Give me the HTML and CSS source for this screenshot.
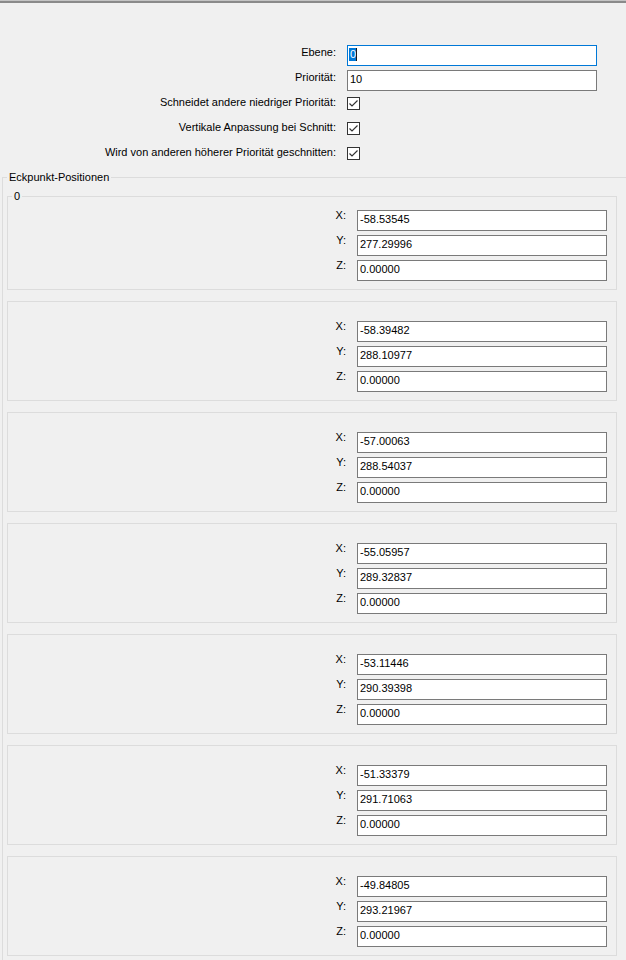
FILE: index.html
```html
<!DOCTYPE html>
<html lang="de">
<head>
<meta charset="utf-8">
<title>Eigenschaften</title>
<link rel="stylesheet" href="styles.css">
</head>
<body>
<div class="topline"></div>
<div class="form">
  <div class="row">
    <span class="lbl">Ebene:</span>
    <div class="field focused"><span class="sel">0</span><span class="caret"></span></div>
  </div>
  <div class="row">
    <span class="lbl">Priorität:</span>
    <div class="field">10</div>
  </div>
  <div class="row">
    <span class="lbl">Schneidet andere niedriger Priorität:</span>
    <span class="check"><svg width="11" height="11" viewBox="0 0 11 11"><polyline points="1.5,5.5 4,8 9.5,2.5" fill="none" stroke="#333" stroke-width="1.2"/></svg></span>
  </div>
  <div class="row">
    <span class="lbl">Vertikale Anpassung bei Schnitt:</span>
    <span class="check"><svg width="11" height="11" viewBox="0 0 11 11"><polyline points="1.5,5.5 4,8 9.5,2.5" fill="none" stroke="#333" stroke-width="1.2"/></svg></span>
  </div>
  <div class="row">
    <span class="lbl">Wird von anderen höherer Priorität geschnitten:</span>
    <span class="check"><svg width="11" height="11" viewBox="0 0 11 11"><polyline points="1.5,5.5 4,8 9.5,2.5" fill="none" stroke="#333" stroke-width="1.2"/></svg></span>
  </div>
</div>

<fieldset class="outer">
  <legend>Eckpunkt-Positionen</legend>
  <div class="outer-body">
    <fieldset class="vbox first">
      <legend>0</legend>
      <div class="coords">
        <span class="clbl">X:</span><div class="field">-58.53545</div>
        <span class="clbl">Y:</span><div class="field">277.29996</div>
        <span class="clbl">Z:</span><div class="field">0.00000</div>
      </div>
    </fieldset>
    <fieldset class="vbox">
      <div class="coords">
        <span class="clbl">X:</span><div class="field">-58.39482</div>
        <span class="clbl">Y:</span><div class="field">288.10977</div>
        <span class="clbl">Z:</span><div class="field">0.00000</div>
      </div>
    </fieldset>
    <fieldset class="vbox">
      <div class="coords">
        <span class="clbl">X:</span><div class="field">-57.00063</div>
        <span class="clbl">Y:</span><div class="field">288.54037</div>
        <span class="clbl">Z:</span><div class="field">0.00000</div>
      </div>
    </fieldset>
    <fieldset class="vbox">
      <div class="coords">
        <span class="clbl">X:</span><div class="field">-55.05957</div>
        <span class="clbl">Y:</span><div class="field">289.32837</div>
        <span class="clbl">Z:</span><div class="field">0.00000</div>
      </div>
    </fieldset>
    <fieldset class="vbox">
      <div class="coords">
        <span class="clbl">X:</span><div class="field">-53.11446</div>
        <span class="clbl">Y:</span><div class="field">290.39398</div>
        <span class="clbl">Z:</span><div class="field">0.00000</div>
      </div>
    </fieldset>
    <fieldset class="vbox">
      <div class="coords">
        <span class="clbl">X:</span><div class="field">-51.33379</div>
        <span class="clbl">Y:</span><div class="field">291.71063</div>
        <span class="clbl">Z:</span><div class="field">0.00000</div>
      </div>
    </fieldset>
    <fieldset class="vbox">
      <div class="coords">
        <span class="clbl">X:</span><div class="field">-49.84805</div>
        <span class="clbl">Y:</span><div class="field">293.21967</div>
        <span class="clbl">Z:</span><div class="field">0.00000</div>
      </div>
    </fieldset>
  </div>
</fieldset>
</body>
</html>
```

FILE: styles.css
```css
html, body {
  margin: 0;
  padding: 0;
  overflow: hidden;
  background: #f0f0f0;
}
body {
  font-family: "Liberation Sans", Arial, sans-serif;
  font-size: 11px;
  color: #000;
  width: 626px;
  height: 960px;
}
.topline {
  height: 2px;
  border-top: 1px solid #c4c4c4;
  background: #8a8a8a;
}
.form {
  padding-top: 42px;
}
.row {
  display: grid;
  grid-template-columns: 336px 250px;
  column-gap: 11px;
  height: 25px;
  align-items: start;
}
.lbl {
  text-align: right;
  line-height: 13px;
  padding-top: 1px;
  white-space: nowrap;
}
.field {
  box-sizing: border-box;
  height: 21px;
  width: 250px;
  border: 1px solid #7a7a7a;
  background: #fff;
  padding: 2px 2px 0 2px;
  line-height: 13px;
  white-space: nowrap;
  overflow: hidden;
}
.field.focused {
  border-color: #0078d7;
  display: flex;
  align-items: flex-start;
}
.sel {
  background: #0078d7;
  color: #fff;
  margin-left: -1px;
  padding-left: 1px;
  height: 13px;
}
.caret {
  display: inline-block;
  width: 1px;
  height: 13px;
  background: #1a1a1a;
}
.check {
  box-sizing: border-box;
  width: 13px;
  height: 13px;
  margin-top: 2px;
  border: 1px solid #333;
  background: #fff;
  display: flex;
}
.check svg {
  display: block;
}
.outer {
  margin: 1px 0 0 2px;
  padding: 0;
  width: 650px;
  box-sizing: border-box;
  border: 1px solid #dcdcdc;
  min-inline-size: 0;
}
.outer > legend,
.vbox > legend {
  margin-left: 4px;
  padding: 0 2px;
  line-height: 13px;
  font-size: 11px;
}
.outer-body {
  padding: 6px 0 0 4px;
}
.vbox {
  box-sizing: border-box;
  width: 610px;
  margin: 0 0 11px 0;
  padding: 19px 0 8px 0;
  border: 1px solid #dcdcdc;
  min-inline-size: 0;
}
.vbox.first {
  padding-top: 7px;
}
.coords {
  display: grid;
  grid-template-columns: 338px 250px;
  column-gap: 11px;
  row-gap: 4px;
}
.clbl {
  text-align: right;
  line-height: 11px;
}
```
